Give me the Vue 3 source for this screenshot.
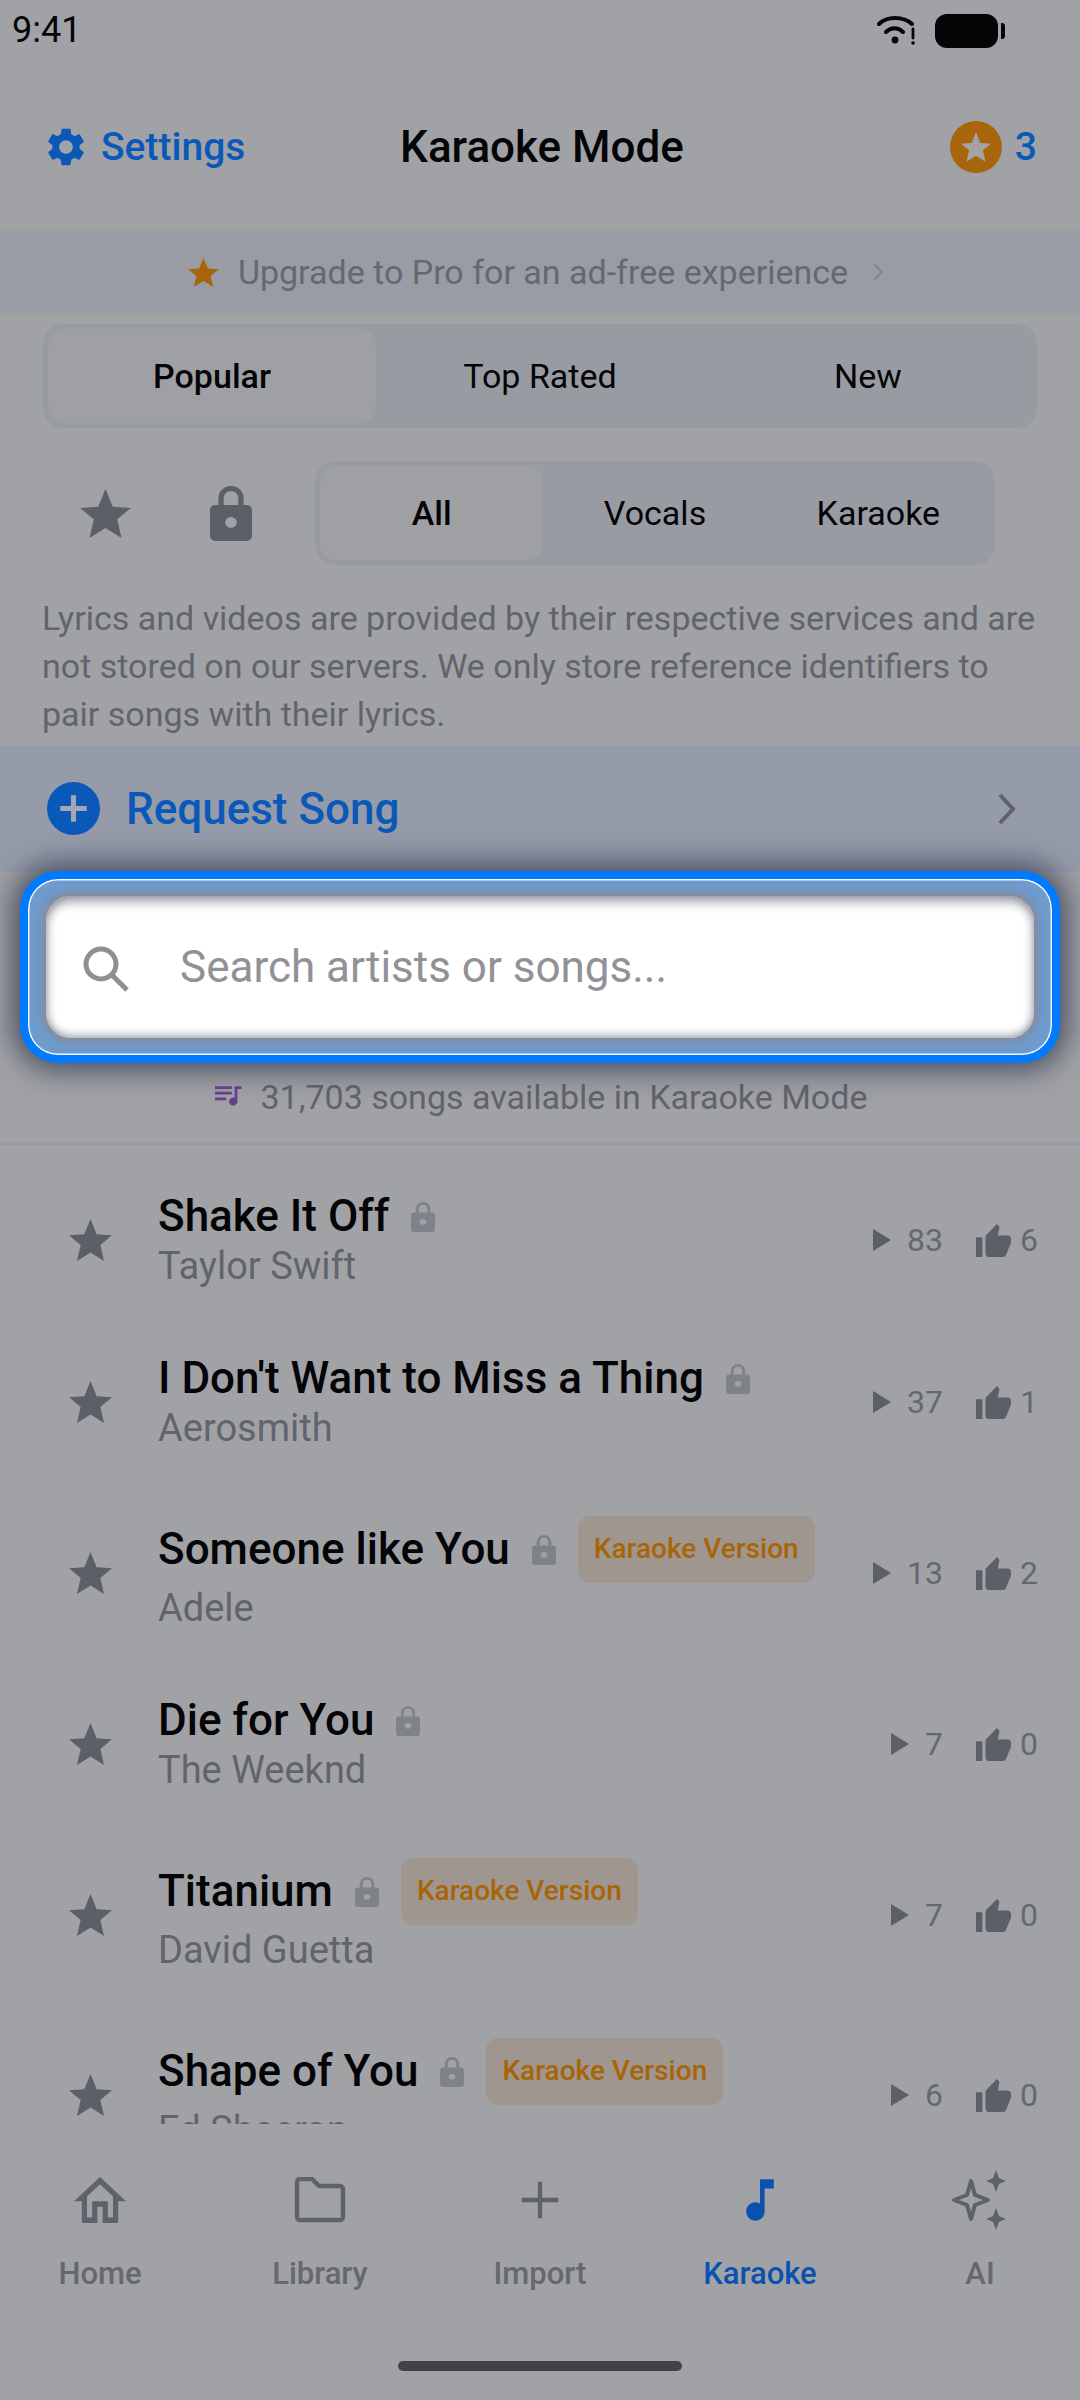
<script setup>
const songs = [
  { title: 'Shake It Off', artist: 'Taylor Swift', plays: 83, likes: 6 },
  { title: "I Don't Want to Miss a Thing", artist: 'Aerosmith', plays: 37, likes: 1 },
  { title: 'Someone like You', artist: 'Adele', plays: 13, likes: 2, karaoke: true },
  { title: 'Die for You', artist: 'The Weeknd', plays: 7, likes: 0 },
  { title: 'Titanium', artist: 'David Guetta', plays: 7, likes: 0, karaoke: true },
  { title: 'Shape of You', artist: 'Ed Sheeran', plays: 6, likes: 0, karaoke: true },
];

const starPoints = '12,1.5 15,8.9 22.5,9.4 16.8,14.2 18.6,22 12,17.8 5.4,22 7.2,14.2 1.5,9.4 9,8.9';
const lockPath = 'M4 9.5h1.2V6.6a4.8 4.8 0 0 1 9.6 0v2.9H16a2 2 0 0 1 2 2V22a2 2 0 0 1-2 2H4a2 2 0 0 1-2-2V11.500a2 2 0 0 1 2-2zM7.200 9.500h5.600V6.600a2.800 2.800 0 0 0-5.600 0zM10 14.300a2.200 2.200 0 1 0 0 4.400 2.200 2.200 0 0 0 0-4.400z';
const thumbPath = 'M1 21h4V9H1v12zm22-11c0-1.100-.9-2-2-2h-6.310l.95-4.570.03-.32c0-.41-.17-.79-.44-1.060L14.170 1 7.590 7.590C7.220 7.950 7 8.450 7 9v10c0 1.100.9 2 2 2h9c.83 0 1.540-.5 1.840-1.220l3.020-7.050c.09-.23.14-.47.14-.73v-2z';
</script>

<template>
  <div class="page">
    <div class="status">
      <span class="time">9:41</span>
      <div class="status-icons">
        <svg class="wifi" viewBox="0 0 40 32" fill="none" stroke="#050508" stroke-linecap="round">
          <path d="M2 10C10 2 26 2 35 10" stroke-width="4" />
          <path d="M9 18C14 13 21 13 26 18" stroke-width="4" />
          <circle cx="18" cy="26" r="3.400" fill="#050508" stroke="none" />
          <path d="M36 15v9" stroke-width="2.800" />
          <circle cx="36" cy="29" r="1.800" fill="#050508" stroke="none" />
        </svg>
        <div class="battery"></div>
        <div class="battery-cap"></div>
      </div>
    </div>

    <header class="nav">
      <div class="settings">
        <svg class="gear" viewBox="2 2 20 20"><path fill="currentColor" d="M19.140 12.940c.04-.3.06-.61.06-.94 0-.32-.02-.64-.07-.94l2.030-1.580c.18-.14.23-.41.12-.61l-1.920-3.320c-.12-.22-.37-.29-.59-.22l-2.390.96c-.5-.38-1.030-.7-1.620-.94l-.36-2.540c-.04-.24-.24-.41-.48-.41h-3.840c-.24 0-.43.17-.47.41l-.36 2.540c-.59.24-1.130.57-1.620.94l-2.390-.96c-.22-.08-.47 0-.59.22L2.740 8.870c-.12.21-.08.47.12.61l2.030 1.580c-.05.3-.09.63-.09.94s.02.64.07.94l-2.030 1.580c-.18.14-.23.41-.12.61l1.920 3.320c.12.22.37.29.59.22l2.390-.96c.5.38 1.030.7 1.620.94l.36 2.540c.05.24.24.41.48.41h3.840c.24 0 .44-.17.47-.41l.36-2.540c.59-.24 1.130-.56 1.620-.94l2.390.96c.22.08.47 0 .59-.22l1.920-3.320c.12-.22.07-.47-.12-.61l-2.010-1.580zM12 15.600c-1.980 0-3.600-1.620-3.600-3.600s1.620-3.600 3.600-3.600 3.600 1.620 3.600 3.600-1.620 3.600-3.600 3.600z" /></svg>
        <span>Settings</span>
      </div>
      <h1 class="nav-title">Karaoke Mode</h1>
      <div class="credits">
        <div class="coin">
          <svg viewBox="1.5 1.5 21 20.5"><polygon :points="starPoints" fill="#a3a4a8" /></svg>
        </div>
        <span>3</span>
      </div>
    </header>

    <div class="upgrade">
      <svg class="upgrade-star" viewBox="1.5 1.5 21 20.5" preserveAspectRatio="none"><polygon :points="starPoints" fill="#a8650c" /></svg>
      <span>Upgrade to Pro for an ad-free experience</span>
      <svg class="upgrade-arrow" viewBox="0 0 12 20" fill="none" stroke="#84868e" stroke-width="2"><path d="M2 2l8 8-8 8" /></svg>
    </div>

    <div class="seg seg-main">
      <div class="seg-item active">Popular</div>
      <div class="seg-item">Top Rated</div>
      <div class="seg-item">New</div>
    </div>

    <div class="filters">
      <svg class="filter-star" viewBox="1.5 1.5 21 20.5" preserveAspectRatio="none"><polygon :points="starPoints" fill="#5c5e68" /></svg>
      <svg class="filter-lock" viewBox="2 1.800 16 22.200" preserveAspectRatio="none"><path fill="#5c5e68" fill-rule="evenodd" :d="lockPath" /></svg>
      <div class="seg seg-type">
        <div class="seg-item active">All</div>
        <div class="seg-item">Vocals</div>
        <div class="seg-item">Karaoke</div>
      </div>
    </div>

    <p class="notice">Lyrics and videos are provided by their respective services and are not stored on our servers. We only store reference identifiers to pair songs with their lyrics.</p>

    <div class="request">
      <svg class="request-plus" viewBox="0 0 52 52">
        <circle cx="26" cy="26" r="26" fill="#0a58b8" />
        <path d="M26 13v26M13 26h26" stroke="#a3a7b4" stroke-width="5" />
      </svg>
      <span class="request-label">Request Song</span>
      <svg class="request-arrow" viewBox="0 0 20 32" fill="none" stroke="#5f626c" stroke-width="4"><path d="M3 2l13 14L3 30" /></svg>
    </div>

    <div class="search-frame">
      <div class="search-input">
        <svg class="search-icon" viewBox="0 0 46 46" fill="none" stroke="#8f8f94" stroke-width="5">
          <circle cx="18" cy="18" r="15" />
          <path d="M29 29l15 15" />
        </svg>
        <span class="placeholder">Search artists or songs...</span>
      </div>
    </div>

    <div class="count">
      <svg class="count-icon" viewBox="3 5 20 16"><path fill="#6a4090" d="M15 6H3v2h12V6zm0 4H3v2h12v-2zM3 16h8v-2H3v2zM17 6v8.180c-.31-.11-.65-.18-1-.18-1.660 0-3 1.340-3 3s1.340 3 3 3 3-1.340 3-3V8h3V6h-5z" /></svg>
      <span>31,703 songs available in Karaoke Mode</span>
    </div>

    <main class="list">
      <div v-for="song in songs" :key="song.title" class="song">
        <svg class="song-star" viewBox="1.5 1.5 21 20.5" preserveAspectRatio="none"><polygon :points="starPoints" fill="#5c5e68" /></svg>
        <div class="song-text">
          <div class="song-head">
            <span class="song-title">{{ song.title }}</span>
            <svg class="song-lock" viewBox="2 1.800 16 22.200" preserveAspectRatio="none"><path fill="#80828a" fill-rule="evenodd" :d="lockPath" /></svg>
            <span v-if="song.karaoke" class="badge">Karaoke Version</span>
          </div>
          <div class="song-artist">{{ song.artist }}</div>
        </div>
        <div class="stats">
          <svg class="play" viewBox="0 0 18 22"><path fill="#5c5e68" d="M0 0l18 11L0 22z" /></svg>
          <span class="plays">{{ song.plays }}</span>
          <svg class="thumb" viewBox="1 1 22 20" preserveAspectRatio="none"><path fill="#5c5e68" :d="thumbPath" /></svg>
          <span>{{ song.likes }}</span>
        </div>
      </div>
    </main>

    <nav class="tabs">
      <div class="tab">
        <svg class="tab-icon" viewBox="2 3 20 17" preserveAspectRatio="none"><path fill="#5f616b" d="M12 5.690l5 4.500V18h-2v-6H9v6H7v-7.810l5-4.500M12 3L2 12h3v8h6v-6h2v6h6v-8h3L12 3z" /></svg>
        <span>Home</span>
      </div>
      <div class="tab">
        <svg class="tab-icon" viewBox="0 0 52 46" fill="none" stroke="#5f616b" stroke-width="4.500" stroke-linejoin="round"><path d="M3 5a3 3 0 0 1 3-3h12l7 7h21a3 3 0 0 1 3 3v28a3 3 0 0 1-3 3H6a3 3 0 0 1-3-3z" /></svg>
        <span>Library</span>
      </div>
      <div class="tab">
        <svg class="tab-icon" viewBox="-7 -5 52 48" stroke="#5f616b" stroke-width="4.500"><path d="M19 0v38M0 19h38" /></svg>
        <span>Import</span>
      </div>
      <div class="tab current">
        <svg class="tab-icon" viewBox="4 2 16 20"><path fill="#0a52b0" d="M12 3v10.550c-.59-.34-1.270-.55-2-.55-2.210 0-4 1.790-4 4s1.790 4 4 4 4-1.790 4-4V7h4V3h-6z" /></svg>
        <span>Karaoke</span>
      </div>
      <div class="tab">
        <svg class="tab-icon sparkle" viewBox="0 0 60 60">
          <path d="M21 11l4 14 13 5-13 5-4 14-4-14-13-5 13-5z" fill="none" stroke="#5f616b" stroke-width="4" stroke-linejoin="round" />
          <path d="M46 0l3 8 7 3-7 3-3 8-3-8-7-3 7-3zM46 38l3 8 7 3-7 3-3 8-3-8-7-3 7-3z" fill="#5f616b" />
        </svg>
        <span>AI</span>
      </div>
    </nav>
    <div class="home-bar"></div>
  </div>
</template>

<style scoped>
.page {
  width: 1080px;
  height: 2400px;
  display: flex;
  flex-direction: column;
  overflow: hidden;
  background: #a1a2a6;
  font-family: Roboto, "Noto Sans", sans-serif;
  color: #050508;
}
.status {
  height: 60px;
  flex: none;
  display: flex;
  justify-content: space-between;
  padding: 10px 75px 0 12px;
  box-sizing: border-box;
}
.time {
  font-size: 36px;
  line-height: 40px;
}
.status-icons {
  display: flex;
  align-items: flex-start;
  padding-top: 4px;
}
.wifi {
  width: 40px;
  height: 32px;
  margin-right: 18px;
}
.battery {
  width: 63px;
  height: 34px;
  border-radius: 12px;
  background: #050508;
}
.battery-cap {
  width: 4px;
  height: 16px;
  margin: 9px 0 0 3px;
  border-radius: 0 3px 3px 0;
  background: #050508;
}
.nav {
  height: 171px;
  flex: none;
  display: grid;
  grid-template-columns: 1fr auto 1fr;
  align-items: center;
  padding: 2px 43px 0 47px;
  box-sizing: border-box;
}
.settings {
  display: flex;
  align-items: center;
  gap: 16px;
  color: #0a58b8;
  font-size: 39px;
  font-weight: 500;
}
.gear {
  width: 38px;
  height: 38px;
}
.nav-title {
  margin: 0;
  font-size: 44px;
  font-weight: 500;
}
.credits {
  justify-self: end;
  display: flex;
  align-items: center;
  gap: 13px;
  color: #0a58b8;
  font-size: 39px;
  font-weight: 500;
}
.coin {
  width: 52px;
  height: 52px;
  border-radius: 50%;
  background: #a8650c;
  display: flex;
  align-items: center;
  justify-content: center;
}
.coin svg {
  width: 30px;
  height: 30px;
}
.upgrade {
  height: 82px;
  flex: none;
  display: flex;
  align-items: center;
  justify-content: center;
  padding-right: 8px;
  background: #9a9ca5;
  color: #666870;
  font-size: 34px;
}
.upgrade-star {
  width: 31px;
  height: 29px;
  margin-right: 19px;
}
.upgrade-arrow {
  width: 12px;
  height: 20px;
  margin-left: 24px;
}
.seg {
  display: grid;
  grid-template-columns: repeat(3, 1fr);
  padding: 5px;
  border-radius: 20px;
  background: #999ba3;
  box-sizing: border-box;
}
.seg-main {
  flex: none;
  height: 104px;
  margin: 11px 43px 0;
}
.seg-item {
  display: flex;
  align-items: center;
  justify-content: center;
  font-size: 34px;
  border-radius: 16px;
}
.seg-item.active {
  background: #9fa0a4;
  font-weight: 500;
}
.filters {
  flex: none;
  display: flex;
  align-items: center;
  height: 104px;
  margin-top: 33px;
  padding: 0 85px 0 80px;
}
.filter-star {
  width: 51px;
  height: 49px;
  margin-right: 79px;
}
.filter-lock {
  width: 42px;
  height: 55px;
  margin-right: 63px;
}
.seg-type {
  flex: 1;
  height: 104px;
}
.notice {
  flex: none;
  margin: 29px 40px 7px 42px;
  font-size: 34px;
  line-height: 48px;
  color: #62646c;
}
.request {
  height: 127px;
  flex: none;
  display: flex;
  align-items: center;
  padding: 0 63px 0 47px;
  background: #959ba9;
}
.request-plus {
  width: 53px;
  height: 53px;
}
.request-label {
  flex: 1;
  margin-left: 26px;
  color: #0a58b8;
  font-size: 44px;
  font-weight: 500;
}
.request-arrow {
  width: 20px;
  height: 32px;
}
.search-frame {
  position: relative;
  flex: none;
  height: 192px;
  margin: -1px 20px 0;
  padding: 14px 15px;
  box-sizing: border-box;
  border: 8px solid #007aff;
  border-radius: 38px;
  background: #6f9bcd;
  box-shadow: 0 0 28px 8px rgba(45, 55, 75, 0.75), inset 0 0 0 1.5px #f4f8ff;
}
.search-input {
  height: 100%;
  display: flex;
  align-items: center;
  padding-left: 37px;
  box-sizing: border-box;
  border: 3px solid #858ea2;
  border-radius: 28px;
  background: #fff;
  box-shadow: 0 0 9px 2px rgba(125, 135, 155, 0.6), inset 0 11px 12px -6px rgba(110, 115, 130, 0.75), inset 0 -8px 9px -5px rgba(110, 115, 130, 0.55), inset 7px 0 9px -5px rgba(110, 115, 130, 0.5), inset -7px 0 9px -5px rgba(110, 115, 130, 0.5);
}
.search-icon {
  width: 46px;
  height: 46px;
  margin-top: 3px;
}
.placeholder {
  margin-left: 51px;
  font-size: 44px;
  color: #919196;
}
.count {
  flex: none;
  height: 82px;
  display: flex;
  align-items: flex-start;
  justify-content: center;
  gap: 18px;
  box-sizing: border-box;
  padding: 14px 0 0 2px;
  line-height: 40px;
  font-size: 34px;
  color: #62646c;
  border-bottom: 3px solid #989aa3;
}
.count-icon {
  width: 28px;
  height: 24px;
  margin-top: 7px;
}
.list {
  flex: none;
  height: 979px;
  padding-top: 14px;
  box-sizing: border-box;
  overflow: hidden;
}
.song {
  display: flex;
  align-items: center;
  padding: 32px 42px 32px 69px;
}
.song-star {
  flex: none;
  width: 43px;
  height: 42px;
  margin-right: 46px;
}
.song-text {
  flex: 1;
  min-width: 0;
}
.song-head {
  display: flex;
  align-items: center;
  gap: 22px;
}
.song-title {
  font-size: 44px;
  line-height: 51px;
  font-weight: 500;
  white-space: nowrap;
}
.song-lock {
  flex: none;
  width: 24px;
  height: 30px;
}
.badge {
  margin: 1px 0;
  padding: 0 16px;
  height: 67px;
  line-height: 65px;
  border-radius: 12px;
  background: #9f9690;
  color: #a86508;
  font-size: 28px;
  font-weight: 500;
  white-space: nowrap;
}
.song-artist {
  margin-top: 2px;
  font-size: 38px;
  line-height: 45px;
  color: #62646c;
}
.stats {
  flex: none;
  display: flex;
  align-items: center;
  font-size: 32px;
  color: #666870;
}
.play {
  width: 18px;
  height: 22px;
  margin-right: 16px;
}
.plays {
  margin-right: 33px;
}
.thumb {
  width: 35px;
  height: 33px;
  margin-right: 9px;
}
.tabs {
  flex: none;
  display: grid;
  grid-template-columns: repeat(5, 1fr);
  margin: 0 -10px;
  padding: 53px 0 0;
  height: 237px;
  box-sizing: border-box;
  align-items: start;
}
.tab {
  display: flex;
  flex-direction: column;
  align-items: center;
  font-size: 31px;
  font-weight: 500;
  color: #666870;
}
.tab.current {
  color: #0a52b0;
}
.tab-icon {
  width: 52px;
  height: 46px;
  margin-bottom: 32px;
}
.tab-icon.sparkle {
  width: 60px;
  height: 60px;
  margin: -7px 0 25px;
}
.home-bar {
  flex: none;
  width: 284px;
  height: 10px;
  margin: 0 auto;
  border-radius: 5px;
  background: #414247;
}
</style>

<style>
body {
  background: #a1a2a6;
}
</style>
